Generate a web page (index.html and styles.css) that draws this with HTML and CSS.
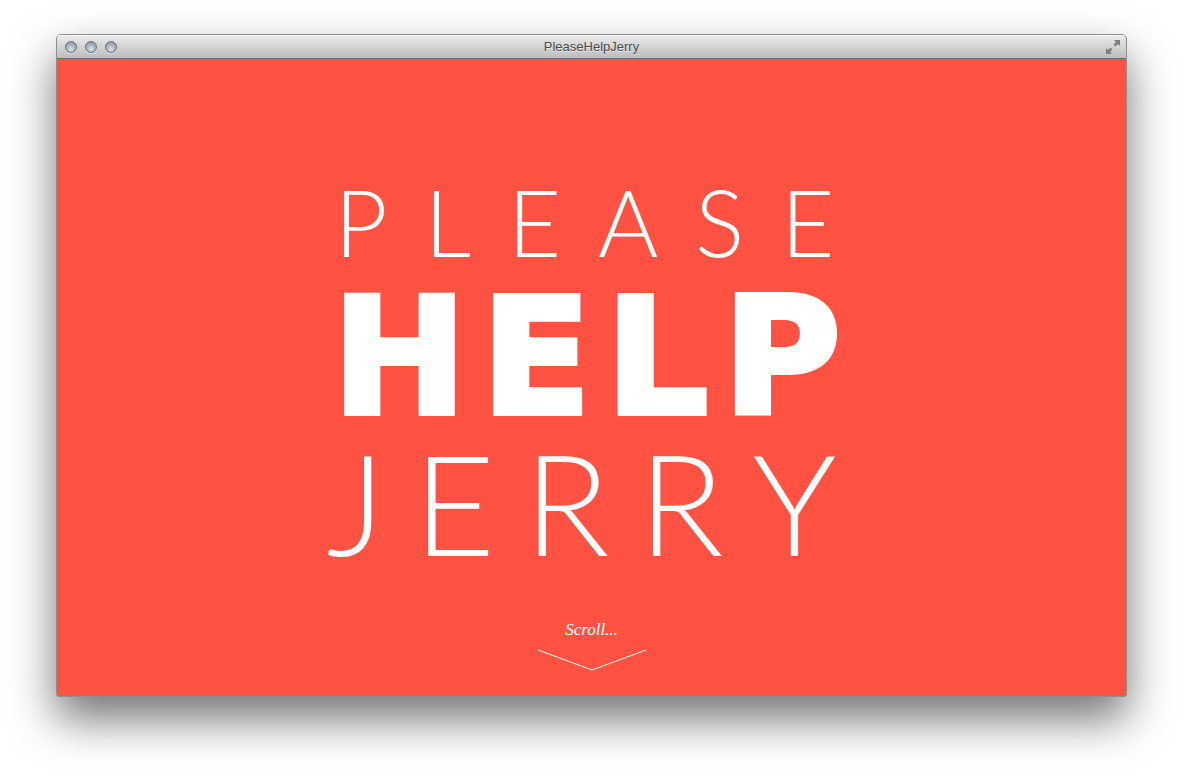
FILE: index.html
```html
<!DOCTYPE html>
<html lang="en">
<head>
<meta charset="utf-8">
<title>PleaseHelpJerry</title>
<link rel="stylesheet" href="styles.css">
</head>
<body>
<div class="window">
  <div class="titlebar">
    <div class="lights">
      <span class="light"></span>
      <span class="light"></span>
      <span class="light"></span>
    </div>
    <div class="title">PleaseHelpJerry</div>
    <svg class="resize" width="16" height="16" viewBox="0 0 16 16">
      <path d="M9 1 H15 V7 L13 5 L10.5 7.5 L8.5 5.5 L11 3 Z" fill="#7d7d7d"/>
      <path d="M7 15 H1 V9 L3 11 L5.5 8.5 L7.5 10.5 L5 13 Z" fill="#7d7d7d"/>
    </svg>
  </div>
  <div class="content">
    <div class="hero">
      <div class="line please"><span>P</span><span>L</span><span>E</span><span>A</span><span>S</span><span>E</span></div>
      <div class="line help"><span>H</span><span>E</span><span>L</span><span>P</span></div>
      <div class="line jerry"><span>J</span><span>E</span><span>R</span><span>R</span><span>Y</span></div>
    </div>
    <div class="scroll">Scroll...</div>
    <svg class="arrow" width="110" height="22" viewBox="0 0 110 22">
      <polyline points="1,1 55,21 109,1" fill="none" stroke="#ffffff" stroke-width="1"/>
    </svg>
  </div>
</div>
</body>
</html>
```
FILE: styles.css
```css
html, body {
  margin: 0;
  padding: 0;
  background: #ffffff;
}
body {
  padding: 34px 0 0 56px;
  height: 776px;
  box-sizing: border-box;
  overflow: hidden;
}
.window {
  width: 1071px;
  height: 663px;
  box-sizing: border-box;
  border: 1px solid #8f8f8f;
  border-radius: 5px 5px 3px 3px;
  display: flex;
  flex-direction: column;
  box-shadow: 0 22px 45px rgba(0, 0, 0, 0.55);
  overflow: hidden;
  background: #ff5243;
}
.titlebar {
  height: 23px;
  flex: none;
  display: flex;
  align-items: center;
  position: relative;
  background: linear-gradient(#ececec, #d4d4d4 50%, #bdbdbd);
  border-bottom: 1px solid #6d6d6d;
  box-shadow: inset 0 1px 0 #f7f7f7;
}
.lights {
  display: flex;
  gap: 8px;
  padding-left: 8px;
}
.light {
  width: 12px;
  height: 12px;
  border-radius: 50%;
  box-sizing: border-box;
  border: 1px solid #6a737c;
  background: radial-gradient(circle at 50% 70%, #dfe6ec 0, #aab5bf 45%, #7f8b96 100%);
  box-shadow: 0 1px 0 rgba(255, 255, 255, 0.6);
}
.title {
  position: absolute;
  left: 0;
  right: 0;
  top: 0;
  line-height: 23px;
  text-align: center;
  font-family: "Liberation Sans", Arial, sans-serif;
  font-size: 13px;
  color: #4a4a4a;
  text-shadow: 0 1px 0 rgba(255, 255, 255, 0.6);
}
.resize {
  position: absolute;
  right: 5px;
  top: 4px;
}
.content {
  flex: 1;
  display: flex;
  flex-direction: column;
  align-items: center;
  padding-top: 123px;
  color: #ffffff;
}
.hero {
  display: flex;
  flex-direction: column;
  align-items: flex-start;
  width: 510px;
  margin-left: -20px;
}
.line {
  display: flex;
  justify-content: space-between;
}
.please {
  font-family: Lato, Inter, sans-serif;
  font-weight: 300;
  font-size: 92px;
  line-height: 80px;
  height: 80px;
  width: 500px;
  margin-left: 8px;
}
.help {
  font-family: "DejaVu Sans", Inter, sans-serif;
  font-weight: 700;
  font-size: 160px;
  line-height: 140px;
  height: 140px;
  width: 508px;
  margin-left: 6px;
  margin-top: 26px;
  -webkit-text-stroke: 6px #ffffff;
}
.jerry {
  font-family: Lato, Inter, sans-serif;
  font-weight: 300;
  font-size: 141px;
  line-height: 120px;
  height: 120px;
  width: 510px;
  margin-top: 14px;
}
.scroll {
  margin-top: 58px;
  font-family: "Liberation Serif", "Times New Roman", serif;
  font-style: italic;
  font-size: 17px;
  line-height: 20px;
  color: #ffffff;
}
.arrow {
  margin-top: 9px;
  display: block;
}
```
